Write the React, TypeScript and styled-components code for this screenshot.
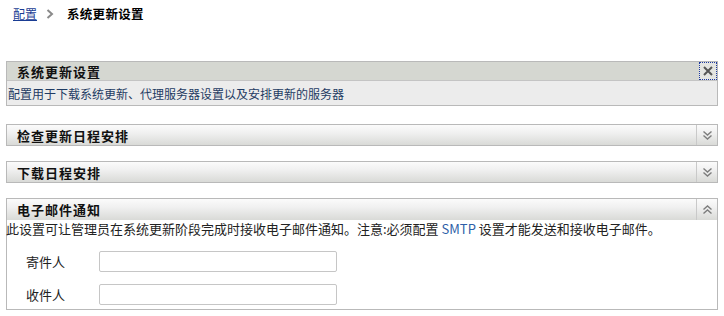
import React from "react";
import styled, { createGlobalStyle } from "styled-components";

const Global = createGlobalStyle`
  html, body { margin: 0; padding: 0; background: #fff; }
  body { font-family: "Noto Sans CJK SC", "DejaVu Sans", sans-serif; color: #000; }
`;

const Page = styled.div`
  padding: 0 6px;
  width: 712px;
`;

const Crumbs = styled.div`
  display: flex;
  align-items: center;
  height: 27px;
  padding-left: 7px;
  font-size: 12px;
  line-height: 14px;
`;

const CrumbLink = styled.a`
  color: #1a3d94;
  text-decoration: underline;
  cursor: pointer;
`;

const CrumbSep = styled.span`
  display: flex;
  align-items: center;
  margin: 0 13px 0 9px;
`;

const CrumbCurrent = styled.span`
  font-weight: bold;
  font-size: 12.5px;
  letter-spacing: 0.3px;
`;

const Panel = styled.section<{ $top: number }>`
  margin-top: ${(p) => p.$top}px;
  border: 1px solid #b9b9b9;
  background: #fff;
`;

const Header = styled.div<{ $flat?: boolean; $h: number }>`
  display: flex;
  align-items: stretch;
  height: ${(p) => p.$h}px;
  background: ${(p) =>
    p.$flat ? "#d5d7d1" : "linear-gradient(#fbfbfb, #f0f0f0 40%, #d9dad7)"};
`;

const Title = styled.div`
  flex: 1;
  display: flex;
  align-items: center;
  padding-left: 10px;
  font-size: 13px;
  font-weight: bold;
  letter-spacing: 1px;
  color: #111;
`;

const Toggle = styled.div`
  width: 20px;
  border-left: 1px solid #c9c9c9;
  display: flex;
  align-items: center;
  justify-content: center;
`;

const CloseBtn = styled.div`
  width: 16px;
  height: 16px;
  border: 1px dotted #1d39a0;
  display: flex;
  align-items: center;
  justify-content: center;
  background: #e4e5e1;
`;

const Desc = styled.div`
  height: 24px;
  display: flex;
  align-items: center;
  padding-left: 1px;
  background: #ececec;
  border-top: 1px solid #c4c4c4;
  font-size: 12px;
  color: #1f3b63;
`;

const Body = styled.div`
  padding: 1px 0 3px 0;
`;

const Note = styled.div`
  font-size: 13px;
  line-height: 16px;
  color: #222;
  margin-left: -1px;
  white-space: nowrap;
`;

const Smtp = styled.span`
  color: #2f5fa8;
`;

const Form = styled.div`
  display: grid;
  grid-template-columns: 92px 238px;
  row-gap: 12px;
  align-items: center;
  padding: 14px 0 1px 0;
`;

const Label = styled.label`
  font-size: 13px;
  color: #222;
  padding-left: 19px;
`;

const Input = styled.input`
  box-sizing: border-box;
  height: 21px;
  width: 238px;
  border: 1px solid #c6c6c6;
  border-radius: 2px;
  background: #fff;
`;

const DoubleChevron = ({ up }: { up?: boolean }) => (
  <svg width="11" height="11" viewBox="0 0 11 11">
    <g
      fill="none"
      stroke="#7d7d7d"
      strokeWidth="1.4"
      transform={up ? "rotate(180 5.5 5.5)" : undefined}
    >
      <path d="M1.5 1.5 L5.5 5 L9.5 1.5" />
      <path d="M1.5 5.5 L5.5 9 L9.5 5.5" />
    </g>
  </svg>
);

const SepIcon = () => (
  <svg width="8" height="10" viewBox="0 0 8 10">
    <path d="M1.5 1 L6 5 L1.5 9" fill="none" stroke="#8a8a8a" strokeWidth="2" />
  </svg>
);

const XIcon = () => (
  <svg width="10" height="10" viewBox="0 0 10 10">
    <path d="M1 1 L9 9 M9 1 L1 9" stroke="#555" strokeWidth="2" />
  </svg>
);

export default function App() {
  return (
    <>
      <Global />
      <Page>
        <Crumbs>
          <CrumbLink>配置</CrumbLink>
          <CrumbSep>
            <SepIcon />
          </CrumbSep>
          <CrumbCurrent>系统更新设置</CrumbCurrent>
        </Crumbs>

        <Panel $top={34}>
          <Header $flat $h={18}>
            <Title>系统更新设置</Title>
            <CloseBtn>
              <XIcon />
            </CloseBtn>
          </Header>
          <Desc>配置用于下载系统更新、代理服务器设置以及安排更新的服务器</Desc>
        </Panel>

        <Panel $top={18}>
          <Header $h={20}>
            <Title>检查更新日程安排</Title>
            <Toggle>
              <DoubleChevron />
            </Toggle>
          </Header>
        </Panel>

        <Panel $top={15}>
          <Header $h={20}>
            <Title>下载日程安排</Title>
            <Toggle>
              <DoubleChevron />
            </Toggle>
          </Header>
        </Panel>

        <Panel $top={15}>
          <Header $h={21}>
            <Title>电子邮件通知</Title>
            <Toggle>
              <DoubleChevron up />
            </Toggle>
          </Header>
          <Body>
            <Note>
              此设置可让管理员在系统更新阶段完成时接收电子邮件通知。注意:必须配置{" "}
              <Smtp>SMTP</Smtp> 设置才能发送和接收电子邮件。
            </Note>
            <Form>
              <Label>寄件人</Label>
              <Input />
              <Label>收件人</Label>
              <Input />
            </Form>
          </Body>
        </Panel>
      </Page>
    </>
  );
}
